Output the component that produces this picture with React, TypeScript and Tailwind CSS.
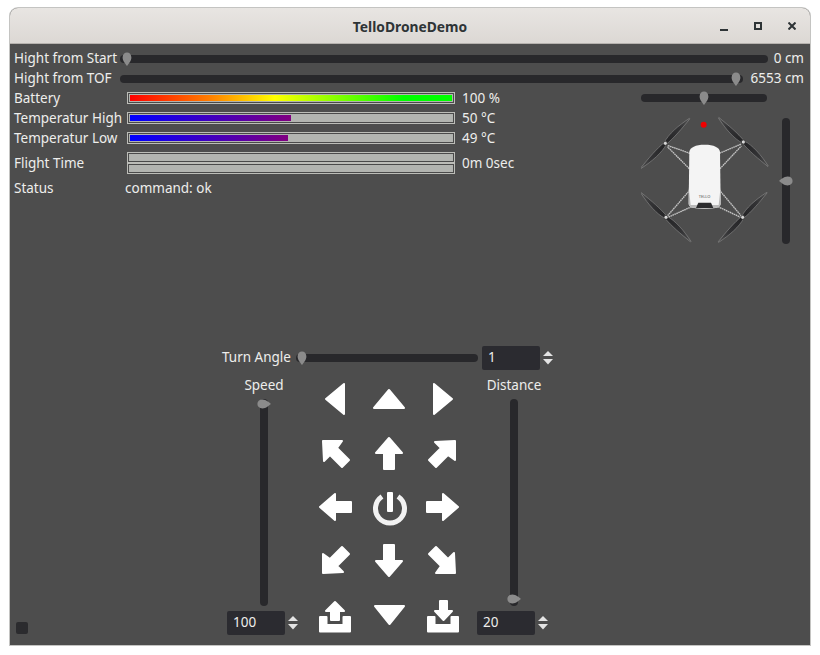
const ARROW_UP = "M27 12 L40 27 H32 V43 H22 V27 H14 Z";
const ARROW_NW = "M15 15 H34 L29 22 L41 34 L34 41 L22 29 L16 35 Z";
const TRAY = "M12 29 H18.5 V37 H35.5 V29 H42 V43.5 H12 Z";

function Cell({ children }: { children: React.ReactNode }) {
  return (
    <svg viewBox="0 0 54 54" className="h-[54px] w-[54px]" fill="#fff" stroke="#fff" strokeWidth="2" strokeLinejoin="round">
      {children}
    </svg>
  );
}

function Thumb({ dir, className }: { dir: "down" | "left" | "right"; className: string }) {
  const rotate = dir === "down" ? "" : dir === "left" ? "rotate(90 7 7)" : "rotate(-90 7 7)";
  return (
    <svg viewBox="0 0 14 14" className={`absolute h-[14px] w-[14px] ${className}`}>
      <path transform={rotate} d="M7 14 C5.5 12 2.6 9 2.6 5.5 C2.6 2.2 4.6 0.4 7 0.4 C9.4 0.4 11.4 2.2 11.4 5.5 C11.4 9 8.5 12 7 14 Z" fill="#8b8b8b" />
    </svg>
  );
}

function HSlider({ className, thumb }: { className: string; thumb: string }) {
  return (
    <div className={`relative h-2 rounded-full bg-[#28282b] ${className}`}>
      <Thumb dir="down" className={`top-[-3px] ${thumb}`} />
    </div>
  );
}

function Bar({ fill, className = "h-[12px]" }: { fill?: string; className?: string }) {
  return (
    <div className={`w-[328px] border border-[#bcbdb8] bg-[#b2b4b0] outline-1 -outline-offset-2 outline-[#4a4a4a] ${className}`}>
      <div className="h-full p-[2px]">{fill && <div className={`h-full ${fill}`} />}</div>
    </div>
  );
}

function Spinner({ value }: { value: string }) {
  return (
    <div className="flex h-6 items-center">
      <div className="flex h-6 w-[58px] items-center rounded-[2px] bg-[#2b2b30] pb-[1px] pl-[6px]">{value}</div>
      <svg viewBox="0 0 10 14" className="ml-[3px] h-[14px] w-[10px]" fill="#e4e4e4">
        <path d="M5 0 L10 5 H0 Z" />
        <path d="M0 8 H10 L5 13.5 Z" />
      </svg>
    </div>
  );
}

function Blade({ angle }: { angle: number }) {
  return (
    <path
      transform={`rotate(${angle})`}
      d="M0 -4 C26 -13 66 -10 104 -2 L104 0 C66 4 30 7 0 4 Z"
      fill="url(#blade)"
      stroke="#aaaaaa"
      strokeWidth="1.2"
    />
  );
}

function Prop({ x, y, a, b }: { x: number; y: number; a: number; b: number }) {
  return (
    <g transform={`translate(${x} ${y})`}>
      <Blade angle={a} />
      <Blade angle={b} />
      <circle r="6" fill="#d8d8d8" stroke="#222" strokeWidth="2" />
    </g>
  );
}

function Drone() {
  return (
    <svg viewBox="33 66 384 408" className="mt-1 h-[136px] w-[128px]">
      <defs>
        <linearGradient id="blade" gradientUnits="userSpaceOnUse" x1="0" y1="0" x2="104" y2="0">
          <stop offset="0" stopColor="#232325" />
          <stop offset="0.6" stopColor="#333335" />
          <stop offset="1" stopColor="#505050" />
        </linearGradient>
      </defs>
      <g stroke="#c4c4c4" strokeWidth="4" fill="none" strokeDasharray="5 1.5">
        <path d="M180 190 L112 166 M178 236 L112 170" />
        <path d="M268 190 L334 162 M270 236 L334 168" />
        <path d="M180 300 L112 378 M185 350 L114 382" />
        <path d="M268 300 L334 378 M264 350 L332 382" />
      </g>
      <Prop x={106} y={160} a={-45} b={135} />
      <Prop x={340} y={156} a={225} b={45} />
      <Prop x={108} y={382} a={225} b={45} />
      <Prop x={338} y={382} a={-45} b={135} />
      <circle cx="221" cy="104" r="9" fill="#f00000" />
      <path d="M178 185 C180 172 196 164 224 164 C252 164 268 172 270 185 L272 340 C272 352 262 356 224 356 C186 356 176 352 176 340 Z" fill="#f4f4f4" />
      <path d="M176 290 L176 340 C176 352 186 356 224 356 C262 356 272 352 272 340 L272 290 L266 345 L182 345 Z" fill="#b9b9b9" />
      <path d="M205 338 H243 L250 354 H198 Z" fill="#2c2c2e" />
      <text x="224" y="323" textAnchor="middle" fontSize="12" fill="#555">TELLO</text>
    </svg>
  );
}

export default function App() {
  return (
    <div className="h-[655px] w-[820px] bg-white pl-[10px] pt-2 font-['Noto_Sans',sans-serif] text-[13.5px] text-[#eeeeec]">
      <div className="flex h-[637px] w-[800px] flex-col overflow-hidden rounded-t-[8px] bg-[#4d4d4d] shadow-[0_0_0_1px_#c4c4c2]">
        <div className="relative flex h-9 shrink-0 items-center justify-center border-b border-[#b6b2ae] bg-[linear-gradient(#e8e5e2,#dcd8d4)] pt-[3px] text-[13.8px] font-bold text-[#2e3436]">
          TelloDroneDemo
          <div className="absolute right-[14px] top-[14px] flex items-start gap-[26px]">
            <div className="mt-[7px] h-[2px] w-2 bg-[#2e3436]" />
            <div className="h-2 w-2 border-2 border-[#2e3436]" />
            <svg viewBox="0 0 8 8" className="h-2 w-2" stroke="#2e3436" strokeWidth="2">
              <path d="M0.5 0.5 L7.5 7.5 M7.5 0.5 L0.5 7.5" />
            </svg>
          </div>
        </div>

        <div className="flex flex-1 flex-col px-1 pt-1">
          <div className="flex h-5 items-center">
            <div className="w-[106px] whitespace-nowrap">Hight from Start</div>
            <HSlider className="mt-[2px] w-[648px]" thumb="left-0" />
            <div className="flex-1 pr-[2px] text-right">0 cm</div>
          </div>
          <div className="flex h-5 items-center">
            <div className="w-[106px] whitespace-nowrap">Hight from TOF</div>
            <HSlider className="mt-[2px] w-[623px]" thumb="left-[609px]" />
            <div className="flex-1 pr-[2px] text-right">6553 cm</div>
          </div>

          <div className="flex">
            <div className="w-[627px]">
              <div className="flex h-5 items-center">
                <div className="w-[113px]">Battery</div>
                <Bar fill="w-full bg-[linear-gradient(90deg,#f00,#ff8000_25%,#ff0_45%,#0f0_85%)]" />
                <div className="ml-[7px]">100 %</div>
              </div>
              <div className="flex h-5 items-center">
                <div className="w-[113px] whitespace-nowrap">Temperatur High</div>
                <Bar fill="w-1/2 bg-[linear-gradient(90deg,#00f,#800080)]" />
                <div className="ml-[7px]">50 °C</div>
              </div>
              <div className="flex h-5 items-center">
                <div className="w-[113px] whitespace-nowrap">Temperatur Low</div>
                <Bar fill="w-[49%] bg-[linear-gradient(90deg,#00f,#800080)]" />
                <div className="ml-[7px]">49 °C</div>
              </div>
              <div className="flex h-[30px] items-center">
                <div className="w-[113px]">Flight Time</div>
                <div className="flex flex-col">
                  <Bar className="h-[11px]" />
                  <Bar className="h-[11px]" />
                </div>
                <div className="ml-[7px]">0m 0sec</div>
              </div>
              <div className="flex h-5 items-center">
                <div className="w-[111px]">Status</div>
                <div>command: ok</div>
              </div>
            </div>

            <div className="flex">
              <div className="w-[127px]">
                <div className="flex h-5 items-center">
                  <HSlider className="w-[126px]" thumb="left-[56px]" />
                </div>
                <Drone />
              </div>
              <div className="relative ml-[14px] mt-[30px] h-[126px] w-2 rounded-full bg-[#28282b]">
                <Thumb dir="left" className="left-[-3px] top-[56px]" />
              </div>
            </div>
          </div>

          <div className="flex flex-1 items-end pb-[3px]">
            <div className="mb-2 h-3 w-3 translate-x-[2px] rounded-[2px] bg-[#2b2b2e]" />
            <div className="ml-[196px] flex flex-col">
              <div className="flex h-6 items-center">
                <div className="w-[74px] whitespace-nowrap pb-[1px]">Turn Angle</div>
                <HSlider className="w-[182px]" thumb="left-[-1px]" />
                <div className="ml-1">
                  <Spinner value="1" />
                </div>
              </div>
              <div className="mt-[2px] flex translate-x-[5px] gap-[7px]">
                <div className="flex w-[74px] flex-col pt-[3px]">
                  <div className="flex h-5 items-center justify-center">Speed</div>
                  <div className="relative mx-auto mt-1 h-[207px] w-2 rounded-full bg-[#28282b]">
                    <Thumb dir="right" className="left-[-3px] top-[-2px]" />
                  </div>
                  <div className="mt-[5px]">
                    <Spinner value="100" />
                  </div>
                </div>

                <div className="grid w-[162px] grid-cols-3">
                  <Cell><path d="M18 27 L36 12 V42 Z" /></Cell>
                  <Cell><path d="M27 18 L42 36 H12 Z" /></Cell>
                  <Cell><path d="M36 27 L18 12 V42 Z" /></Cell>

                  <Cell><path d={ARROW_NW} /></Cell>
                  <Cell><path d={ARROW_UP} /></Cell>
                  <Cell><path d={ARROW_NW} transform="rotate(90 27 27)" /></Cell>

                  <Cell><path d={ARROW_UP} transform="rotate(-90 27 27)" /></Cell>
                  <Cell>
                    <path d="M20 16.5 A14.5 14.5 0 1 0 36 16.5" fill="none" strokeWidth="5" stroke="#f2f2f2" strokeLinejoin="miter" />
                    <rect x="26" y="13" width="4" height="18" />
                  </Cell>
                  <Cell><path d={ARROW_UP} transform="rotate(90 27 27)" /></Cell>

                  <Cell><path d={ARROW_NW} transform="rotate(-90 27 27)" /></Cell>
                  <Cell><path d={ARROW_UP} transform="rotate(180 27 27)" /></Cell>
                  <Cell><path d={ARROW_NW} transform="rotate(180 27 27)" /></Cell>

                  <Cell>
                    <path d="M27 14 L36 23 H31 V32 H23 V23 H18 Z" />
                    <path d={TRAY} />
                  </Cell>
                  <Cell><path d="M13 18 H42 L27.5 36 Z" /></Cell>
                  <Cell>
                    <path d="M24 13 H31 V23 H36 L27.5 32 L19 23 H24 Z" />
                    <path d={TRAY} />
                  </Cell>
                </div>

                <div className="flex w-[74px] flex-col pt-[3px]">
                  <div className="flex h-5 items-center justify-center">Distance</div>
                  <div className="relative mx-auto mt-1 h-[207px] w-2 rounded-full bg-[#28282b]">
                    <Thumb dir="right" className="left-[-3px] top-[193px]" />
                  </div>
                  <div className="mt-[5px]">
                    <Spinner value="20" />
                  </div>
                </div>
              </div>
            </div>
          </div>
        </div>
      </div>
    </div>
  );
}
